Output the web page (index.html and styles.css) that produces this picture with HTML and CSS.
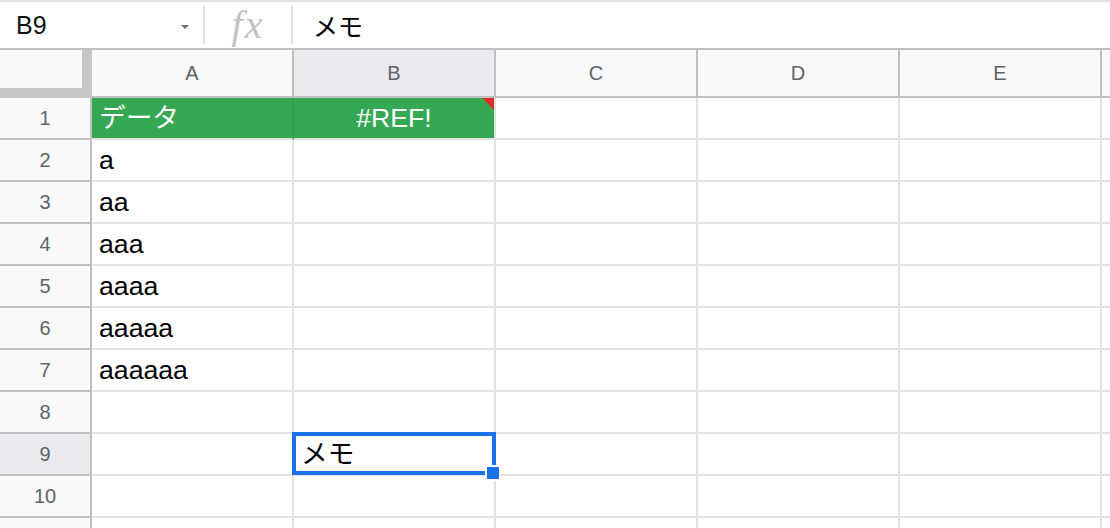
FILE: index.html
```html
<!DOCTYPE html>
<html lang="ja">
<head>
	<meta charset="utf-8">
	<title>Sheet</title>
<link rel="stylesheet" href="styles.css">
</head>
<body>
<!-- formula bar -->
<div class="formula-bar">
	<div class="name-box">
		<span class="cell-ref">B9</span>
		<span class="caret"></span>
	</div>
	<div class="sep"></div>
	<div class="fx">fx</div>
	<div class="sep"></div>
	<div class="formula">メモ</div>
</div>

<!-- grid -->
<div class="sheet">
	<div class="corner"><div class="corner-box"></div></div>
	<div class="col-head">A</div>
	<div class="col-head selected">B</div>
	<div class="col-head">C</div>
	<div class="col-head">D</div>
	<div class="col-head">E</div>
	<div class="col-head"></div>

	<div class="row-head">1</div>
	<div class="cell green split">データ</div>
	<div class="cell green center">#REF!<span class="flag"></span></div>
	<div class="cell"></div><div class="cell"></div><div class="cell"></div><div class="cell"></div>

	<div class="row-head">2</div>
	<div class="cell">a</div>
	<div class="cell"></div><div class="cell"></div><div class="cell"></div><div class="cell"></div><div class="cell"></div>

	<div class="row-head">3</div>
	<div class="cell">aa</div>
	<div class="cell"></div><div class="cell"></div><div class="cell"></div><div class="cell"></div><div class="cell"></div>

	<div class="row-head">4</div>
	<div class="cell">aaa</div>
	<div class="cell"></div><div class="cell"></div><div class="cell"></div><div class="cell"></div><div class="cell"></div>

	<div class="row-head">5</div>
	<div class="cell">aaaa</div>
	<div class="cell"></div><div class="cell"></div><div class="cell"></div><div class="cell"></div><div class="cell"></div>

	<div class="row-head">6</div>
	<div class="cell">aaaaa</div>
	<div class="cell"></div><div class="cell"></div><div class="cell"></div><div class="cell"></div><div class="cell"></div>

	<div class="row-head">7</div>
	<div class="cell">aaaaaa</div>
	<div class="cell"></div><div class="cell"></div><div class="cell"></div><div class="cell"></div><div class="cell"></div>

	<div class="row-head">8</div>
	<div class="cell"></div><div class="cell"></div><div class="cell"></div><div class="cell"></div><div class="cell"></div><div class="cell"></div>

	<div class="row-head selected">9</div>
	<div class="cell"></div>
	<div class="cell active">メモ<span class="selection"></span><span class="handle"></span></div>
	<div class="cell"></div><div class="cell"></div><div class="cell"></div><div class="cell"></div>

	<div class="row-head">10</div>
	<div class="cell"></div><div class="cell"></div><div class="cell"></div><div class="cell"></div><div class="cell"></div><div class="cell"></div>

	<!-- partly visible row, its number falls below the frame -->
	<div class="row-head"></div>
	<div class="cell"></div><div class="cell"></div><div class="cell"></div><div class="cell"></div><div class="cell"></div><div class="cell"></div>
</div>
</body>
</html>
```

FILE: styles.css
```css
body {
	margin: 0;
	overflow: hidden;
	background: #fff;
	font-family: "Liberation Sans", "Noto Sans CJK JP", sans-serif;
}

/* formula bar */
.formula-bar {
	display: flex;
	align-items: center;
	height: 48px;
	box-sizing: border-box;
	border-top: 2px solid #e1e1e1;
}

.name-box {
	width: 203px;
	box-sizing: border-box;
	padding: 0 14px 0 16px;
	display: flex;
	align-items: center;
	justify-content: space-between;
}

.cell-ref {
	font-size: 25px;
	color: #111;
}

.caret {
	width: 0;
	height: 0;
	margin-top: 3px;
	border-left: 4px solid transparent;
	border-right: 4px solid transparent;
	border-top: 4px solid #6f6f6f;
}

.sep {
	width: 2px;
	height: 38px;
	background: #e3e3e3;
}

.fx {
	width: 86px;
	text-align: center;
	font-family: "Liberation Serif", serif;
	font-style: italic;
	font-size: 40px;
	letter-spacing: 2px;
	color: #c2c2c2;
	line-height: 40px;
}

.formula {
	padding-left: 20px;
	font-size: 25px;
	color: #000;
}

/* grid */
.sheet {
	display: grid;
	grid-template-columns: 92px repeat(6, 202px);
	grid-template-rows: 48px repeat(11, 42px);
	border-top: 2px solid #c0c0c0;
}

.sheet > div {
	box-sizing: border-box;
	border-right: 2px solid #e2e2e2;
	border-bottom: 2px solid #e2e2e2;
}

.corner {
	background: #c6c6c6;
	border-color: #c6c6c6 !important;
}

.corner-box {
	width: 82px;
	height: 38px;
	background: #f8f9fa;
}

.col-head {
	display: flex;
	align-items: center;
	justify-content: center;
	background: #f8f9fa;
	border-color: #c0c0c0 !important;
	color: #5f6368;
	font-size: 20px;
}

.row-head {
	background: #f8f9fa;
	border-color: #c0c0c0 !important;
	color: #5f6368;
	font-size: 20px;
	line-height: 40px;
	text-align: center;
}

.selected {
	background: #e8eaed;
}

.cell {
	position: relative;
	padding-left: 7px;
	font-size: 26.67px;
	line-height: 40px;
	white-space: nowrap;
	color: #000;
}

.green {
	background: #34a853;
	color: #fff;
}

.split {
	border-right-color: #31a04f !important;
}

.center {
	padding-left: 0;
	text-align: center;
}

.flag {
	position: absolute;
	top: 0;
	right: 0;
	width: 0;
	height: 0;
	border-top: 12px solid #d93025;
	border-left: 12px solid transparent;
}

/* active cell */
.selection {
	position: absolute;
	top: -2px;
	left: -2px;
	right: -2px;
	bottom: -1px;
	border: 4px solid #1a73e8;
	z-index: 2;
}

.handle {
	position: absolute;
	left: 191px;
	top: 31px;
	width: 12px;
	height: 12px;
	border: 2px solid #fff;
	background: #1a73e8;
	z-index: 3;
}
```
